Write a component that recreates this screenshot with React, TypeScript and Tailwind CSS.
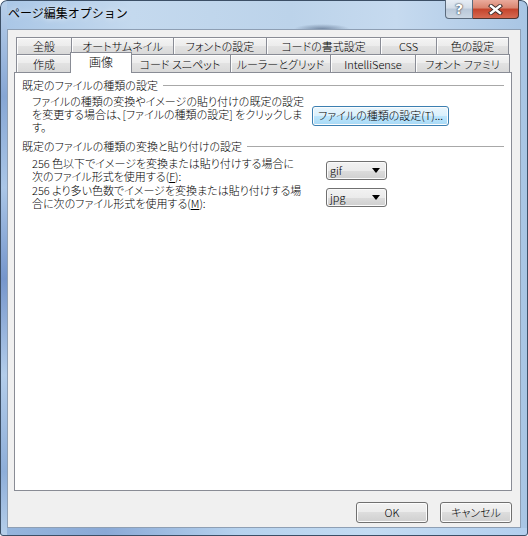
import React from "react";

// Win7 風ダイアログ「ページ編集オプション」
const jp = "font-['Noto_Sans_CJK_JP','Noto_Sans_CJK_SC',sans-serif] [font-feature-settings:'palt']";

type TabDef = { label: string; w: string; active?: boolean };

const rowBack: TabDef[] = [
	{ label: "全般", w: "w-[56px]" },
	{ label: "オートサムネイル", w: "w-[102px]" },
	{ label: "フォントの設定", w: "w-[93px]" },
	{ label: "コードの書式設定", w: "w-[114px]" },
	{ label: "CSS", w: "w-[56px]" },
	{ label: "色の設定", w: "w-[72px]" },
];

const rowFront: TabDef[] = [
	{ label: "作成", w: "w-[56px]" },
	{ label: "画像", w: "w-[62px]", active: true },
	{ label: "コード スニペット", w: "w-[101px]" },
	{ label: "ルーラーとグリッド", w: "w-[100px]" },
	{ label: "IntelliSense", w: "w-[85px]" },
	{ label: "フォント ファミリ", w: "w-[94px]" },
];

const grad = "bg-[linear-gradient(#f2f2f2,#ebebeb_50%,#dddddd_50%,#cfcfcf)]";
const btnBase = "flex items-center justify-center whitespace-nowrap rounded-[3px] border text-[11px] leading-none shadow-[inset_0_0_0_1px_#fcfcfc]";
const btnStd = `${btnBase} border-[#707070] ${grad}`;
const btnDefault = `${btnBase} border-[#3c7fb1] bg-[linear-gradient(#eaf6fd,#d9f0fc_50%,#bee6fd_50%,#a7d9f5)]`;

function Tab({ tab, first, h }: { tab: TabDef; first?: boolean; h: string }) {
	if (tab.active) {
		return (
			<div className={`${tab.w} relative z-10 -mx-[2px] -mt-[2px] -mb-px flex h-[21px] items-center justify-center border border-b-0 border-[#898c95] bg-white pb-[3px] text-[12px] leading-[12px]`}>
				{tab.label}
			</div>
		);
	}
	return (
		<div className={`${tab.w} ${h} flex items-center justify-center whitespace-nowrap border-t border-r border-[#898c95] ${first ? "border-l" : ""} bg-[linear-gradient(#f4f4f4,#ececec_50%,#e2e2e2_50%,#d9d9d9)] text-[11px] leading-[12px] shadow-[inset_1px_1px_0_#fdfdfd]`}>
			{tab.label}
		</div>
	);
}

function GroupHeader({ text }: { text: string }) {
	return (
		<div className="flex items-center pl-[7px] pr-[7px] leading-[13px]">
			<span>{text}</span>
			<div className="ml-[5px] h-px flex-1 bg-[#a8a8a8]" />
		</div>
	);
}

function Combo({ value }: { value: string }) {
	return (
		<div className={`mt-[4px] flex h-[19px] w-[61px] items-center justify-between rounded-[3px] border border-[#707070] ${grad} pl-[3px] pr-[6px] text-[11px] leading-none shadow-[inset_0_0_0_1px_#fafafa]`}>
			<span className="-mt-px">{value}</span>
			<svg width="8" height="5" viewBox="0 0 8 5">
				<path d="M0 0H8L4 5Z" fill="#000" />
			</svg>
		</div>
	);
}

export default function App() {
	return (
		<div
			className={`${jp} flex h-[536px] w-[528px] flex-col overflow-hidden rounded-t-[7px] rounded-b-[3px] font-light text-black shadow-[inset_0_0_0_1px_#3c4f66] [background:linear-gradient(180deg,#b9d0ea,#86a6d4_18%,#aac6e7_35%,#7696cc_52%,#b3cdea_70%,#8eaed9_88%,#b6cfea)_0_0/7px_100%_no-repeat,linear-gradient(90deg,#96b6dd_0%,#8aa9d6_20%,#b6d2ee_45%,#c3dbf2_70%,#b3cfee_100%)_0_528px/100%_8px_no-repeat,radial-gradient(ellipse_28px_5px_at_322px_29px,rgba(55,75,105,0.55),transparent),linear-gradient(90deg,#a9c6e6,#c4d9ee_25%,#bcd3ea_55%,#c6daef_75%,#a8c5e4)]`}
		>
			{/* タイトルバー */}
			<div className="flex h-[29px] shrink-0 items-start justify-between">
				<div className="pl-[8px] pt-[7px] text-[12px] font-normal leading-[12px] [font-feature-settings:normal] [text-shadow:0_0_6px_rgba(255,255,255,0.9)]">
					ページ編集オプション
				</div>
				<div className="mr-[9px] flex">
					<div className="flex h-[19px] w-[28px] items-center justify-center rounded-bl-[4px] border border-t-0 border-[#5b6b7d] bg-[linear-gradient(#e6edf5,#d3dde8_45%,#b9c8d9_50%,#cbd7e4)] font-['DejaVu_Sans',sans-serif] text-[14px] font-bold leading-none text-white [text-shadow:0_0_1px_#2b3440,0_0_2px_#2b3440]">
						?
					</div>
					<div className="flex h-[19px] w-[46px] items-center justify-center rounded-br-[4px] border border-t-0 border-l-0 border-[#4e3530] bg-[linear-gradient(#eaab9c,#d9846f_45%,#c4432b_50%,#d66a52)]">
						<svg width="15" height="11" viewBox="0 0 15 11">
							<path d="M3 2L12 9M12 2L3 9" stroke="#3a2a28" strokeWidth="4.2" strokeLinecap="square" />
							<path d="M3 2L12 9M12 2L3 9" stroke="#fff" strokeWidth="2.4" strokeLinecap="square" />
						</svg>
					</div>
				</div>
			</div>

			{/* クライアント領域 */}
			<div className="mx-[7px] mb-[8px] flex-1 border border-[#8e9fb4] bg-[#f0f0f0]">
				<div className="ml-[6px] mt-[7px] w-[498px]">
					{/* タブ */}
					<div className="ml-[2px] flex">
						{rowBack.map((t, i) => (
							<Tab key={t.label} tab={t} first={i === 0} h="h-[17px]" />
						))}
					</div>
					<div className="ml-[2px] flex items-start">
						{rowFront.map((t, i) => (
							<Tab key={t.label} tab={t} first={i === 0} h="h-[18px]" />
						))}
					</div>

					{/* パネル */}
					<div className="h-[419px] border border-[#898c95] bg-white text-[11px] leading-[13px]">
						<div className="mt-[6px]">
							<GroupHeader text="既定のファイルの種類の設定" />
						</div>
						<div className="mt-[3px] flex items-center pl-[17px]">
							<div className="w-[280px] whitespace-nowrap">
								ファイルの種類の変換やイメージの貼り付けの既定の設定
								<br />
								を変更する場合は、[ファイルの種類の設定] をクリックしま
								<br />
								す。
							</div>
							<div className={`${btnDefault} mt-[2px] h-[20px] w-[137px]`}>ファイルの種類の設定(T)...</div>
						</div>

						<div className="mt-[6px]">
							<GroupHeader text="既定のファイルの種類の変換と貼り付けの設定" />
						</div>
						<div className="mt-[4px] flex items-start pl-[17px]">
							<div className="w-[294px] whitespace-nowrap">
								256 色以下でイメージを変換または貼り付けする場合に
								<br />
								次のファイル形式を使用する(<span className="underline">F</span>):
							</div>
							<Combo value="gif" />
						</div>
						<div className="mt-px flex items-start pl-[17px]">
							<div className="w-[294px] whitespace-nowrap">
								256 より多い色数でイメージを変換または貼り付けする場
								<br />
								合に次のファイル形式を使用する(<span className="underline">M</span>):
							</div>
							<Combo value="jpg" />
						</div>
					</div>

					{/* ボタン */}
					<div className="mt-[11px] flex justify-end gap-[12px]">
						<div className={`${btnStd} h-[21px] w-[72px]`}>OK</div>
						<div className={`${btnStd} h-[21px] w-[72px]`}>キャンセル</div>
					</div>
				</div>
			</div>
		</div>
	);
}
